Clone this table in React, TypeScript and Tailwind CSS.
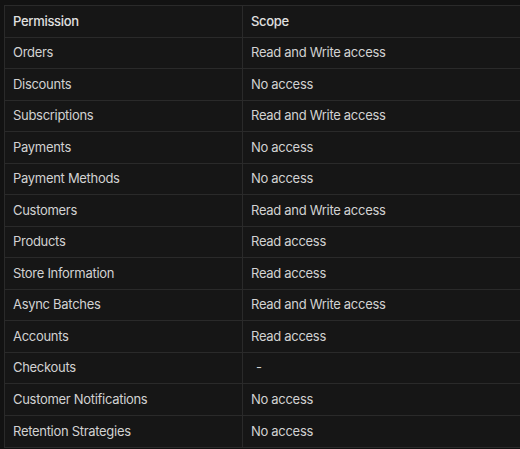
const rows: [string, string][] = [
  ["Orders", "Read and Write access"],
  ["Discounts", "No access"],
  ["Subscriptions", "Read and Write access"],
  ["Payments", "No access"],
  ["Payment Methods", "No access"],
  ["Customers", "Read and Write access"],
  ["Products", "Read access"],
  ["Store Information", "Read access"],
  ["Async Batches", "Read and Write access"],
  ["Accounts", "Read access"],
  ["Checkouts", "-"],
  ["Customer Notifications", "No access"],
  ["Retention Strategies", "No access"],
]

function Row({ a, b, head }: { a: string; b: string; head?: boolean }) {
  return (
    <div
      className={`grid grid-cols-[238px_1fr] h-[31.5px] border-b border-[#2a2a2a] last:border-b-0 ${
        head ? "font-medium text-[#e0e0e0]" : "text-[#d2d2d2]"
      }`}
    >
      <div className="flex items-center pl-2 border-r border-[#2a2a2a]">{a}</div>
      <div className={`flex items-center ${b === "-" ? "pl-[13px]" : "pl-2"}`}>{b}</div>
    </div>
  )
}

export default function App() {
  return (
    <div
      className="w-[520px] h-[449px] overflow-hidden bg-[#121212] pt-[5px] pl-1"
      style={{ fontFamily: "Inter, 'Noto Sans', sans-serif" }}
    >
      <div className="w-[530px] border border-[#2a2a2a] bg-[#161616] text-[13px] tracking-[-0.3px]">
        <Row a="Permission" b="Scope" head />
        {rows.map(([a, b]) => (
          <Row key={a} a={a} b={b} />
        ))}
      </div>
    </div>
  )
}
